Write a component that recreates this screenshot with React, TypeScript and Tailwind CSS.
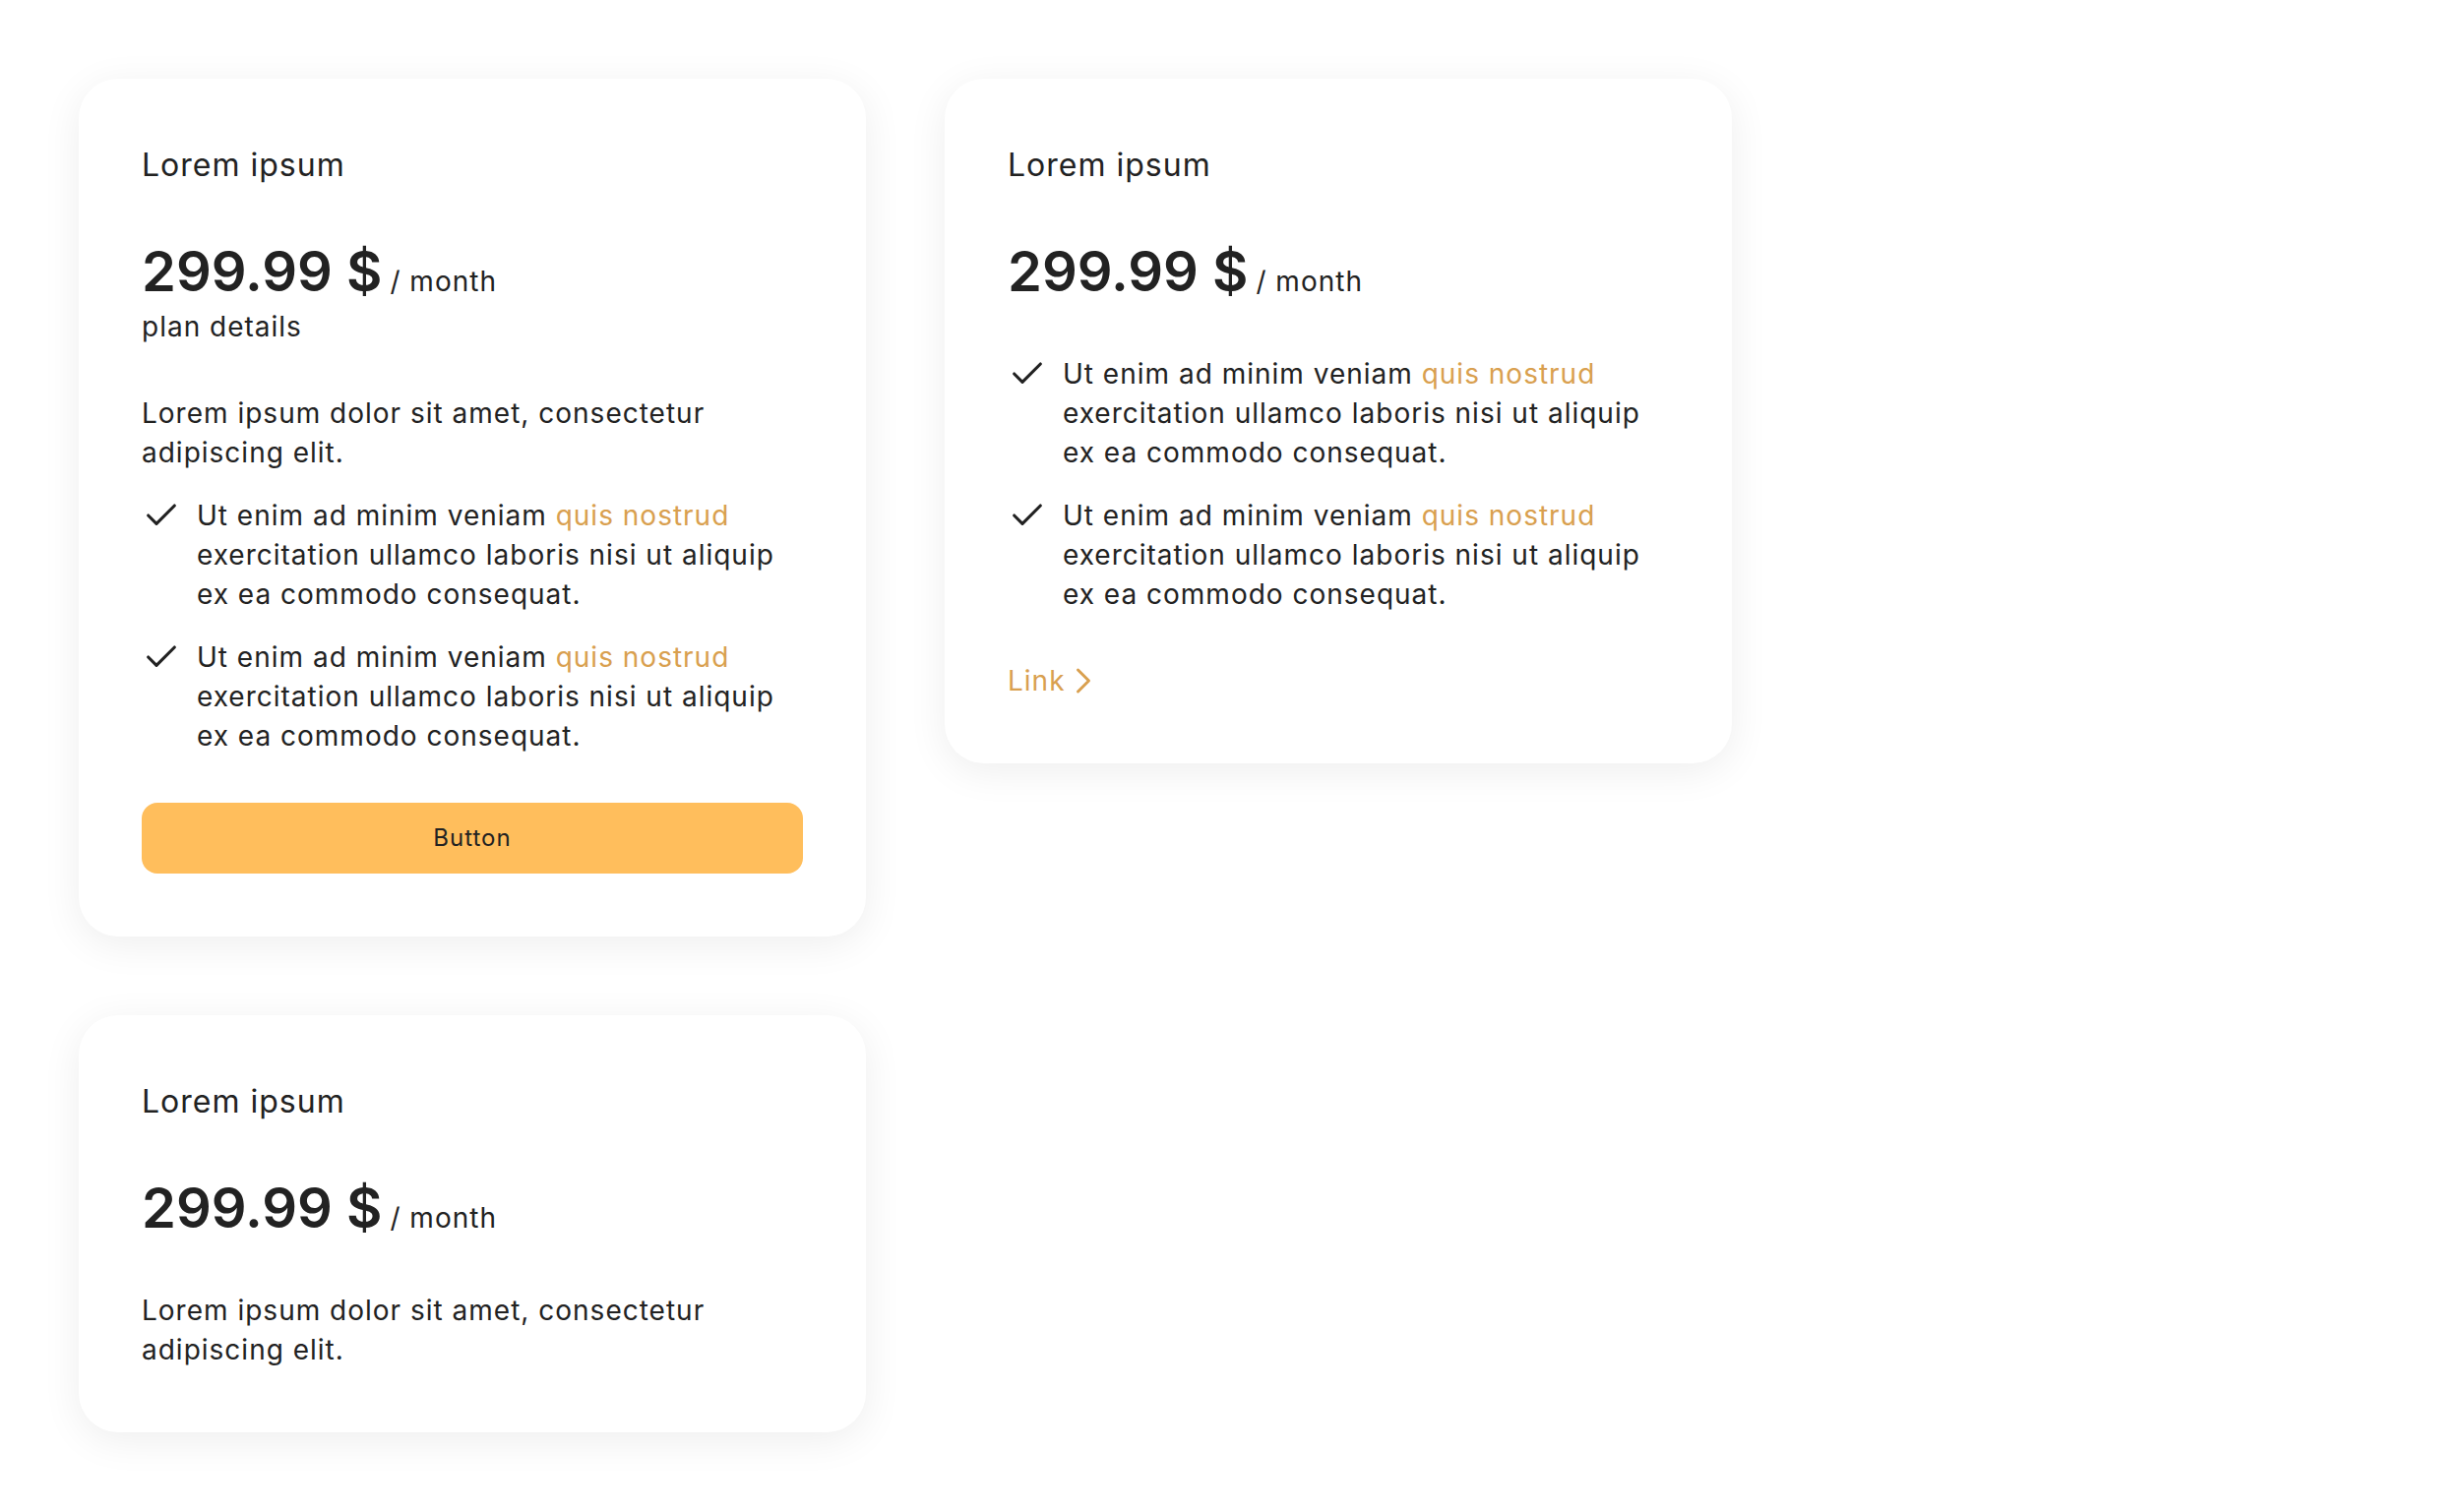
import React from 'react';
import { Check, ChevronRight } from 'lucide-react';

const features = [1, 2];

const Feature = () => (
    <li className="flex gap-4">
        <Check size={40} strokeWidth={1.9} className="shrink-0 text-[#222222]" />
        <p>
            Ut enim ad minim veniam <span className="text-[#D9A04F]">quis nostrud</span> exercitation ullamco laboris nisi ut aliquip ex ea commodo consequat.
        </p>
    </li>
);

const Price = () => (
    <div className="flex items-baseline gap-2">
        <span className="text-[56px] leading-[72px] font-semibold tracking-normal">299.99 $</span>
        <span className="text-[28px]">/ month</span>
    </div>
);

const Card: React.FC<{ children: React.ReactNode }> = ({ children }) => (
    <div className="w-[800px] rounded-[40px] bg-white p-16 shadow-[0_8px_40px_rgba(0,0,0,0.07)]">
        <h3 className="text-[32px] leading-[48px] mb-12">Lorem ipsum</h3>
        {children}
    </div>
);

export default function App() {
    return (
        <div className="min-h-screen bg-white p-20 text-[#222222] font-['Inter','Liberation_Sans',sans-serif] text-[28px] leading-[40px] tracking-[1px]">
            <div className="grid grid-cols-[800px_800px] gap-20 items-start">
                <Card>
                    <Price />
                    <p>plan details</p>
                    <p className="mt-12">Lorem ipsum dolor sit amet, consectetur adipiscing elit.</p>
                    <ul className="mt-6 flex flex-col gap-6">
                        {features.map((f) => (
                            <Feature key={f} />
                        ))}
                    </ul>
                    <button className="mt-12 w-full h-[72px] rounded-2xl bg-[#FFBE5C] text-[24px] text-[#222222]">
                        Button
                    </button>
                </Card>

                <Card>
                    <Price />
                    <ul className="mt-12 flex flex-col gap-6">
                        {features.map((f) => (
                            <Feature key={f} />
                        ))}
                    </ul>
                    <a href="#" className="mt-12 flex h-10 items-center text-[#D9A04F]">
                        Link
                        <ChevronRight size={44} strokeWidth={1.6} className="-ml-1 -my-1" />
                    </a>
                </Card>

                <Card>
                    <Price />
                    <p className="mt-12">Lorem ipsum dolor sit amet, consectetur adipiscing elit.</p>
                </Card>
            </div>
        </div>
    );
}
